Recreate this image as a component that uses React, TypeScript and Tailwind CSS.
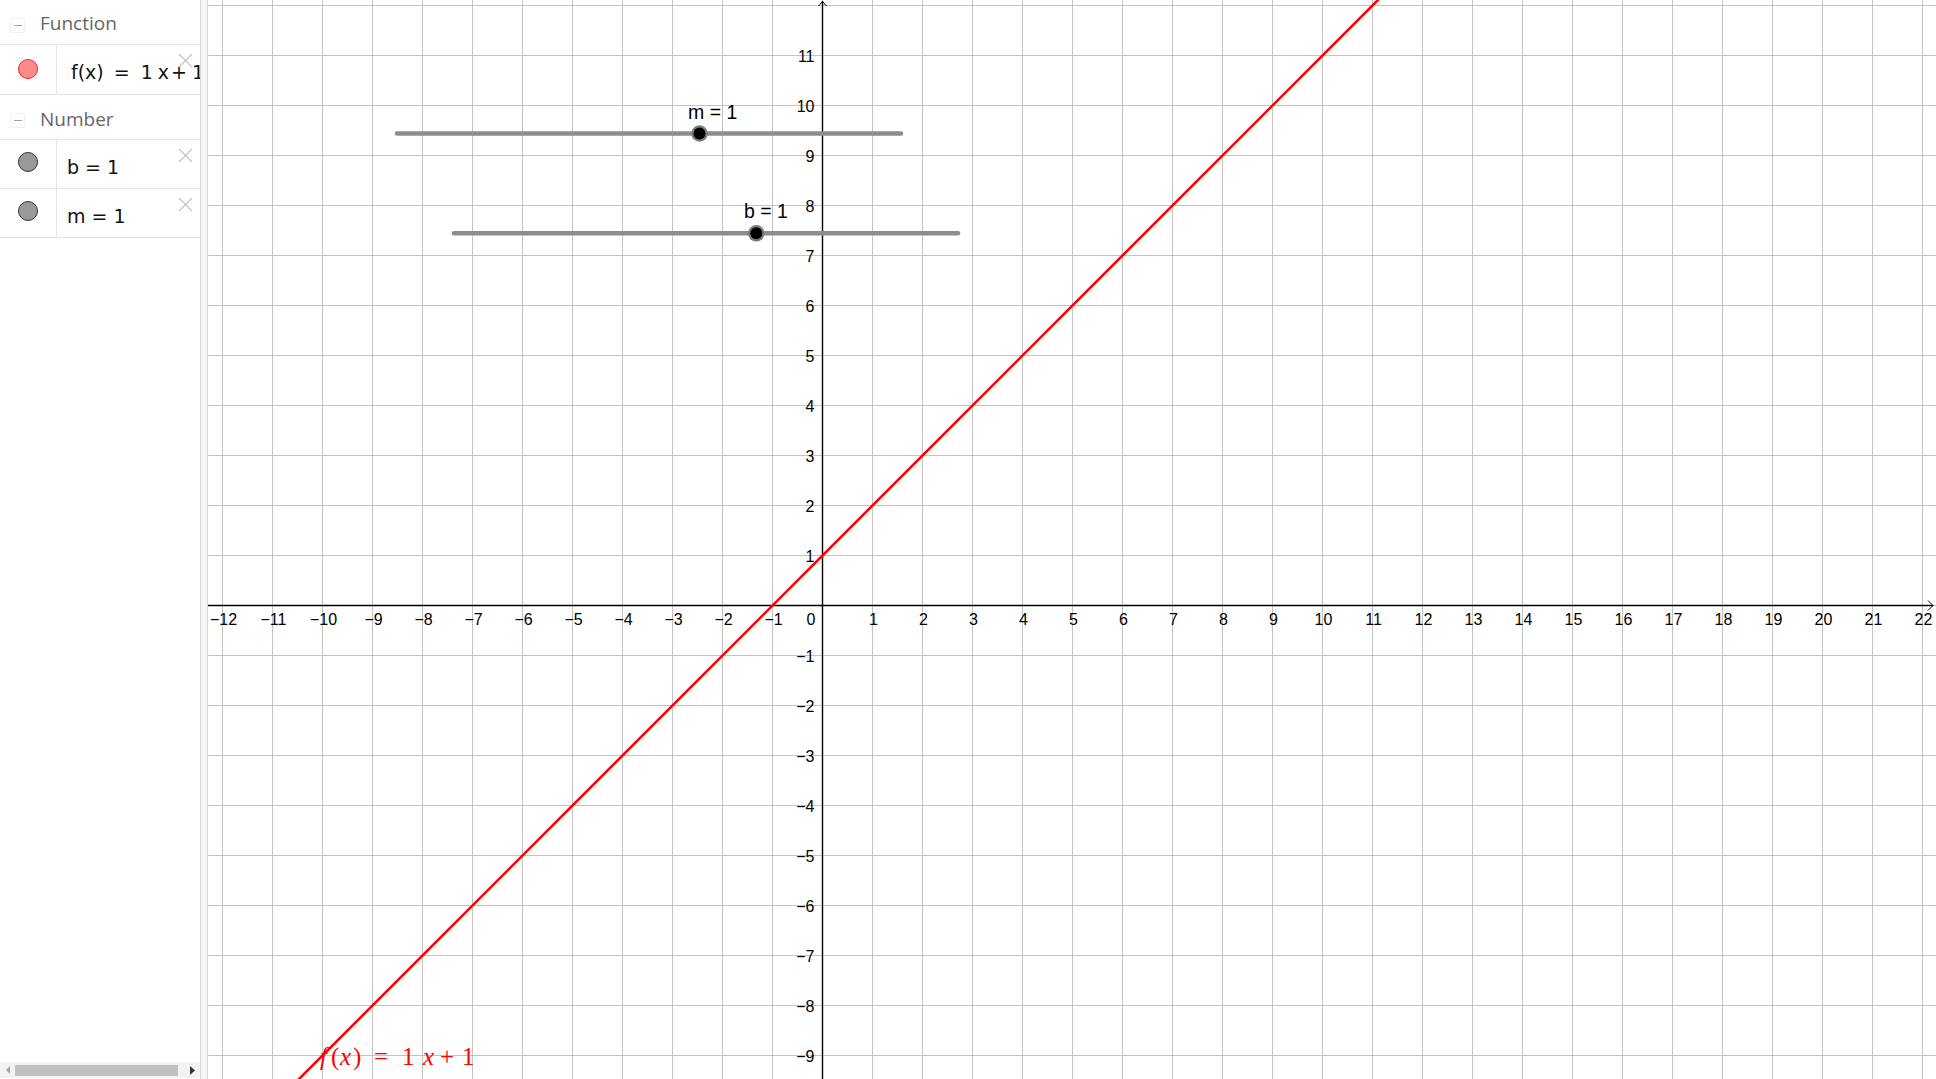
import React from 'react'

const W = 1728
const H = 1079
const OX = 614.5
const OY = 605.5
const U = 50

const sans = "'Liberation Sans', Arial, sans-serif"

function Toggle() {
  return (
    <div className="flex h-[15px] w-[15px] items-center justify-center rounded-[2px] border border-dotted border-[#e2e2e2]">
      <div className="h-[1.5px] w-[8px] bg-[#a0a0a0]" />
    </div>
  )
}

function GroupHeader({ label, pt }: { label: string; pt: string }) {
  return (
    <div className="flex h-[45px] items-start border-b border-[#e4e4e4]">
      <div className="ml-[10px] mt-[18px]">
        <Toggle />
      </div>
      <div
        className={`ml-[15px] text-[19px] leading-none text-[#666666] ${pt}`}
        style={{ fontFamily: "'Open Sans', 'Noto Sans', sans-serif" }}
      >
        {label}
      </div>
    </div>
  )
}

function DeleteX() {
  return (
    <svg className="absolute right-[7px] top-[8px]" width="15" height="15" viewBox="0 0 15 15">
      <path d="M1 1 L14 14 M14 1 L1 14" stroke="#c6c6c6" strokeWidth="1.4" fill="none" />
    </svg>
  )
}

function ItemRow({
  h,
  dotClass,
  dotMt,
  pl = 'pl-[10px]',
  children,
}: {
  h: string
  dotClass: string
  dotMt: string
  pl?: string
  children: React.ReactNode
}) {
  return (
    <div className={`relative flex border-b border-[#e4e4e4] ${h}`}>
      <div className="flex w-[57px] shrink-0 justify-center border-r border-[#e4e4e4]">
        <div className={`h-[20px] w-[20px] rounded-full ${dotClass} ${dotMt}`} />
      </div>
      <div
        className={`min-w-0 flex-1 overflow-hidden whitespace-nowrap pt-[18px] text-[19px] leading-none text-[#111] ${pl}`}
        style={{ fontFamily: "'DejaVu Sans', sans-serif" }}
      >
        {children}
      </div>
      <DeleteX />
    </div>
  )
}

function Scrollbar() {
  return (
    <div className="mb-[1px] flex h-[16px] items-center bg-[#f3f3f3]">
      <div className="flex w-[15px] justify-center">
        <svg width="4" height="8" viewBox="0 0 4 8">
          <polygon points="4,0 0,4 4,8" fill="#a3a3a3" />
        </svg>
      </div>
      <div className="h-[11px] w-[163px] bg-[#c1c1c1]" />
      <div className="flex-1" />
      <div className="flex w-[15px] justify-center">
        <svg width="5" height="9" viewBox="0 0 5 9">
          <polygon points="0,0 5,4.5 0,9" fill="#333333" />
        </svg>
      </div>
    </div>
  )
}

function Sidebar() {
  return (
    <div className="flex h-full w-[200px] shrink-0 flex-col bg-white">
      <GroupHeader label="Function" pt="pt-[14px]" />
      <ItemRow h="h-[50px]" dotClass="bg-[#ff8c8c] border-[1.5px] border-[#ff2020]" dotMt="mt-[14px]" pl="pl-[14px]">
        f(x)
        <span className="ml-[10px]">=</span>
        <span className="ml-[11px]">1</span>
        <span className="ml-[5px]">x</span>
        <span className="ml-[2px]">+</span>
        <span className="ml-[5px]">1</span>
      </ItemRow>
      <GroupHeader label="Number" pt="pt-[15px]" />
      <ItemRow h="h-[49px]" dotClass="bg-[#999999] border border-[#333333]" dotMt="mt-[12px]">
        b = 1
      </ItemRow>
      <ItemRow h="h-[49px]" dotClass="bg-[#999999] border border-[#333333]" dotMt="mt-[12px]">
        m = 1
      </ItemRow>
      <div className="flex-1" />
      <Scrollbar />
    </div>
  )
}

function Slider({ x1, x2, y, px, label, lx, ly }: { x1: number; x2: number; y: number; px: number; label: string; lx: number; ly: number }) {
  return (
    <g>
      <line x1={x1} y1={y} x2={x2} y2={y} stroke="#8d8d8d" strokeWidth="4.5" strokeLinecap="round" />
      <circle cx={px} cy={y} r="8.3" fill="#7d7d7d" />
      <circle cx={px} cy={y} r="6" fill="#000" />
      <text x={lx} y={ly} fontSize="19.5" fontFamily={sans} fill="#000">
        {label}
      </text>
    </g>
  )
}

function Graphics() {
  const xs: number[] = []
  for (let k = -12; k <= 22; k++) xs.push(k)
  const ys: number[] = []
  for (let k = -9; k <= 12; k++) ys.push(k)
  const fmt = (k: number) => (k < 0 ? `\u2212${-k}` : `${k}`)

  return (
    <div className="relative h-full flex-1 overflow-hidden bg-white">
      <svg width={W} height={H} viewBox={`0 0 ${W} ${H}`} className="block">
        {xs.map((k) => (
          <line key={`gx${k}`} x1={OX + U * k} y1={0} x2={OX + U * k} y2={H} stroke="#c2c2c2" strokeWidth="1" />
        ))}
        {ys.map((k) => (
          <line key={`gy${k}`} x1={0} y1={OY - U * k} x2={W} y2={OY - U * k} stroke="#c2c2c2" strokeWidth="1" />
        ))}

        {/* axes */}
        <line x1={0} y1={OY} x2={1725} y2={OY} stroke="#000" strokeWidth="1.4" />
        <polyline points={`1720,${OY - 5} 1725,${OY} 1720,${OY + 5}`} fill="none" stroke="#000" strokeWidth="1" />
        <line x1={OX} y1={1} x2={OX} y2={H} stroke="#000" strokeWidth="1.4" />
        <polyline points={`${OX - 4},6 ${OX},1.5 ${OX + 4},6`} fill="none" stroke="#000" strokeWidth="1" />

        {/* tick labels */}
        {xs
          .filter((k) => k !== 0)
          .map((k) => (
            <text key={`lx${k}`} x={OX + U * k + 1} y={625} fontSize="16" fontFamily={sans} textAnchor="middle" fill="#000">
              {fmt(k)}
            </text>
          ))}
        <text x={OX - 7} y={625} fontSize="16" fontFamily={sans} textAnchor="end" fill="#000">
          0
        </text>
        {ys
          .filter((k) => k !== 0 && k !== 12)
          .map((k) => (
            <text key={`ly${k}`} x={OX - 8} y={OY - U * k + 6} fontSize="16" fontFamily={sans} textAnchor="end" fill="#000">
              {fmt(k)}
            </text>
          ))}

        {/* f(x) = x + 1 */}
        <line x1={OX - 700} y1={OY + 650} x2={OX + 1200} y2={OY - 1250} stroke="#ff0000" strokeWidth="2.6" />

        {/* sliders */}
        <Slider x1={189} x2={693} y={133.5} px={491.5} label="m = 1" lx={480} ly={118.5} />
        <Slider x1={246} x2={750} y={233.3} px={548.3} label="b = 1" lx={536} ly={217.7} />

        {/* function caption */}
        <text y={1065} fontSize="25" fontFamily="'Liberation Serif', 'Times New Roman', serif" fill="#ff0000">
          <tspan x={112} fontStyle="italic">f</tspan>
          <tspan x={123}>(</tspan>
          <tspan x={132} fontStyle="italic">x</tspan>
          <tspan x={145}>)</tspan>
          <tspan x={166}>=</tspan>
          <tspan x={194}>1</tspan>
          <tspan x={215} fontStyle="italic">x</tspan>
          <tspan x={232}>+</tspan>
          <tspan x={254}>1</tspan>
        </text>
      </svg>
    </div>
  )
}

export default function App() {
  return (
    <div className="flex h-[1079px] w-[1936px] overflow-hidden bg-white">
      <Sidebar />
      <div className="h-full w-[8px] shrink-0 border-x border-[#d9d9d9] bg-[#f6f6f6]" />
      <Graphics />
    </div>
  )
}
